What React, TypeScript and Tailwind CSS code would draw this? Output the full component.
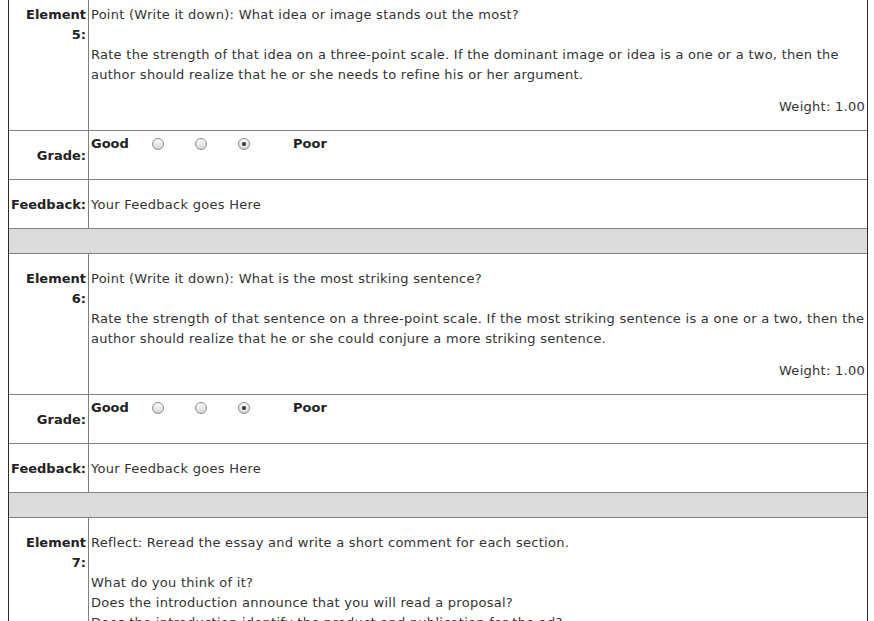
const rowLine = 'border-b border-[#808080]';

function Radio({ checked }: { checked?: boolean }) {
	return (
		<span className="inline-flex h-[12px] w-[12px] items-center justify-center rounded-full border border-[#8a8a8a] bg-gradient-to-b from-[#fdfdfd] to-[#d6d6d6]">
			{checked && <span className="h-[4px] w-[4px] rounded-full bg-[#333]" />}
		</span>
	);
}

function ElementRow({ num, children }: { num: number; children: React.ReactNode }) {
	return (
		<div className={`flex h-[141px] ${rowLine}`}>
			<div className="w-[80px] shrink-0 border-r border-[#808080] pr-[2px] pt-[15px] text-right font-bold text-[#222]">
				Element
				<br />
				{num}:
			</div>
			<div className="flex-1 pl-[2px] pr-[2px] pt-[15px] tracking-[0.27px]">{children}</div>
		</div>
	);
}

function GradeRow() {
	return (
		<div className={`flex h-[49px] ${rowLine}`}>
			<div className="flex w-[80px] shrink-0 items-center justify-end border-r border-[#808080] pr-[2px] pt-[2px] font-bold text-[#222]">
				Grade:
			</div>
			<div className="flex flex-1 items-start pl-[2px] pt-[3px]">
				<span className="w-[61px] font-bold text-[#222]">Good</span>
				<div className="flex h-[20px] items-center gap-[31px]">
					<Radio />
					<Radio />
					<Radio checked />
				</div>
				<span className="ml-[43px] font-bold text-[#222]">Poor</span>
			</div>
		</div>
	);
}

function FeedbackRow() {
	return (
		<div className={`flex h-[49px] ${rowLine}`}>
			<div className="flex w-[80px] shrink-0 items-center justify-end border-r border-[#808080] pr-[2px] pt-[2px] font-bold text-[#222]">
				Feedback:
			</div>
			<div className="flex flex-1 items-center pl-[2px] pt-[2px] tracking-[0.27px]">Your Feedback goes Here</div>
		</div>
	);
}

function Spacer() {
	return <div className={`h-[25px] bg-[#dcdcdc] ${rowLine}`} />;
}

export default function App() {
	return (
		<div className="h-[621px] overflow-hidden bg-white font-['DejaVu_Sans',Verdana,sans-serif] text-[13px] leading-[20px] text-[#333]">
			<div className="ml-[8px] mt-[-10px] w-[860px] border-x border-[#2a2a2a]">
				<ElementRow num={5}>
					<p>Point (Write it down): What idea or image stands out the most?</p>
					<p className="mt-[20px]">
						Rate the strength of that idea on a three-point scale. If the dominant image or idea is a one or a two, then the author should realize that he or she needs to refine his or her argument.
					</p>
					<p className="mt-[12px] text-right">Weight: 1.00</p>
				</ElementRow>
				<GradeRow />
				<FeedbackRow />
				<Spacer />
				<ElementRow num={6}>
					<p>Point (Write it down): What is the most striking sentence?</p>
					<p className="mt-[20px]">
						Rate the strength of that sentence on a three-point scale. If the most striking sentence is a one or a two, then the author should realize that he or she could conjure a more striking sentence.
					</p>
					<p className="mt-[12px] text-right">Weight: 1.00</p>
				</ElementRow>
				<GradeRow />
				<FeedbackRow />
				<Spacer />
				<div className="flex">
					<div className="w-[80px] shrink-0 border-r border-[#808080] pr-[2px] pt-[15px] text-right font-bold text-[#222]">
						Element
						<br />
						7:
					</div>
					<div className="flex-1 pl-[2px] pr-[2px] pt-[15px] tracking-[0.27px]">
						<p>Reflect: Reread the essay and write a short comment for each section.</p>
						<p className="mt-[20px]">What do you think of it?</p>
						<p>Does the introduction announce that you will read a proposal?</p>
						<p>Does the introduction identify the product and publication for the ad?</p>
						<p>Does the body explain the strengths and weaknesses of the ad?</p>
					</div>
				</div>
			</div>
		</div>
	);
}
